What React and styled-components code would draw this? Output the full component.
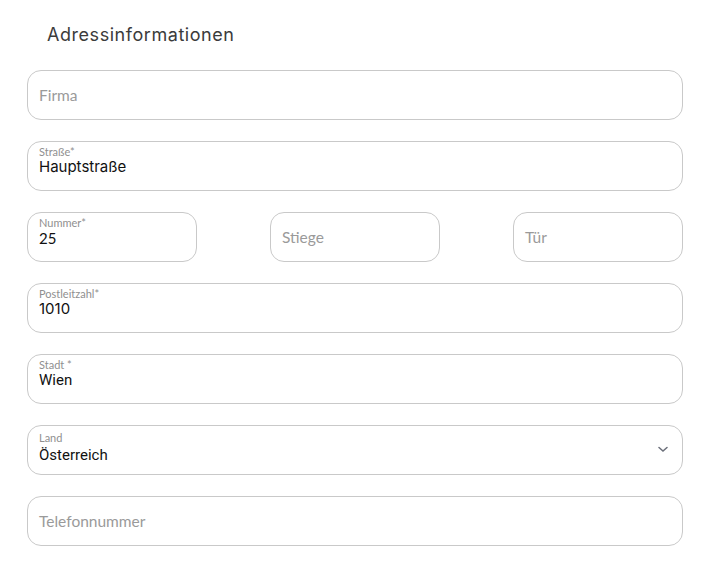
import React from 'react';
import styled, { createGlobalStyle } from 'styled-components';

const GlobalStyle = createGlobalStyle`
	body {
		margin: 0;
		background: #fff;
		font-family: 'Lato', 'Open Sans', sans-serif;
	}
`;

const Form = styled.div`
	width: 702px;
	box-sizing: border-box;
	padding: 21px 19px 0 27px;
	display: flex;
	flex-direction: column;
	gap: 21px;
`;

const Title = styled.h2`
	margin: 0 0 1px 20px;
	height: 27px;
	line-height: 27px;
	font-family: 'Inter', 'Open Sans', sans-serif;
	font-size: 18px;
	font-weight: 400;
	color: #3b3b3b;
	letter-spacing: 0.55px;
`;

const Row = styled.div`
	display: flex;
	justify-content: space-between;
`;

const Box = styled.div`
	position: relative;
	box-sizing: border-box;
	width: ${({ $width }) => $width || '100%'};
	height: 50px;
	border: 1px solid #c9c9c9;
	border-radius: 14px;
	padding: ${({ $filled, $select }) => ($filled ? `${$select ? 6 : 4}px 11px 0` : '0 11px')};
	display: flex;
	flex-direction: column;
	gap: ${({ $select }) => ($select ? '2px' : '0')};
	justify-content: ${({ $filled }) => ($filled ? 'flex-start' : 'center')};
`;

const Label = styled.span`
	font-family: 'Lato', sans-serif;
	font-size: 11px;
	line-height: 12px;
	color: #8f8f8f;
`;

const Value = styled.span`
	font-family: ${({ $font }) => $font || "'Inter', sans-serif"};
	font-size: 15px;
	line-height: 18px;
	color: #111;
`;

const Placeholder = styled.span`
	font-family: 'Lato', sans-serif;
	font-size: 15.5px;
	color: #9a9a9a;
`;

const Chevron = styled.svg`
	position: absolute;
	right: 14px;
	top: 20px;
	width: 10px;
	height: 7px;
`;

const Field = ({ label, value, placeholder, width, font, select }) => (
	<Box $filled={!!value} $width={width} $select={select}>
		{value ? (
			<>
				<Label>{label}</Label>
				<Value $font={font}>{value}</Value>
			</>
		) : (
			<Placeholder>{placeholder}</Placeholder>
		)}
		{select && (
			<Chevron viewBox="0 0 10 7">
				<path d="M1 1.5 L5 5 L9 1.5" fill="none" stroke="#6b6f7a" strokeWidth="1.5" strokeLinecap="round" />
			</Chevron>
		)}
	</Box>
);

export default function App() {
	return (
		<>
			<GlobalStyle />
			<Form>
				<Title>Adressinformationen</Title>
				<Field placeholder="Firma" />
				<Field label="Straße*" value="Hauptstraße" />
				<Row>
					<Field width="170px" label="Nummer*" value="25" font="'Lato', sans-serif" />
					<Field width="170px" placeholder="Stiege" />
					<Field width="170px" placeholder="Tür" />
				</Row>
				<Field label="Postleitzahl*" value="1010" />
				<Field label="Stadt *" value="Wien" font="'Roboto', sans-serif" />
				<Field label="Land" value="Österreich" font="'Roboto', sans-serif" select />
				<Field placeholder="Telefonnummer" />
			</Form>
		</>
	);
}
